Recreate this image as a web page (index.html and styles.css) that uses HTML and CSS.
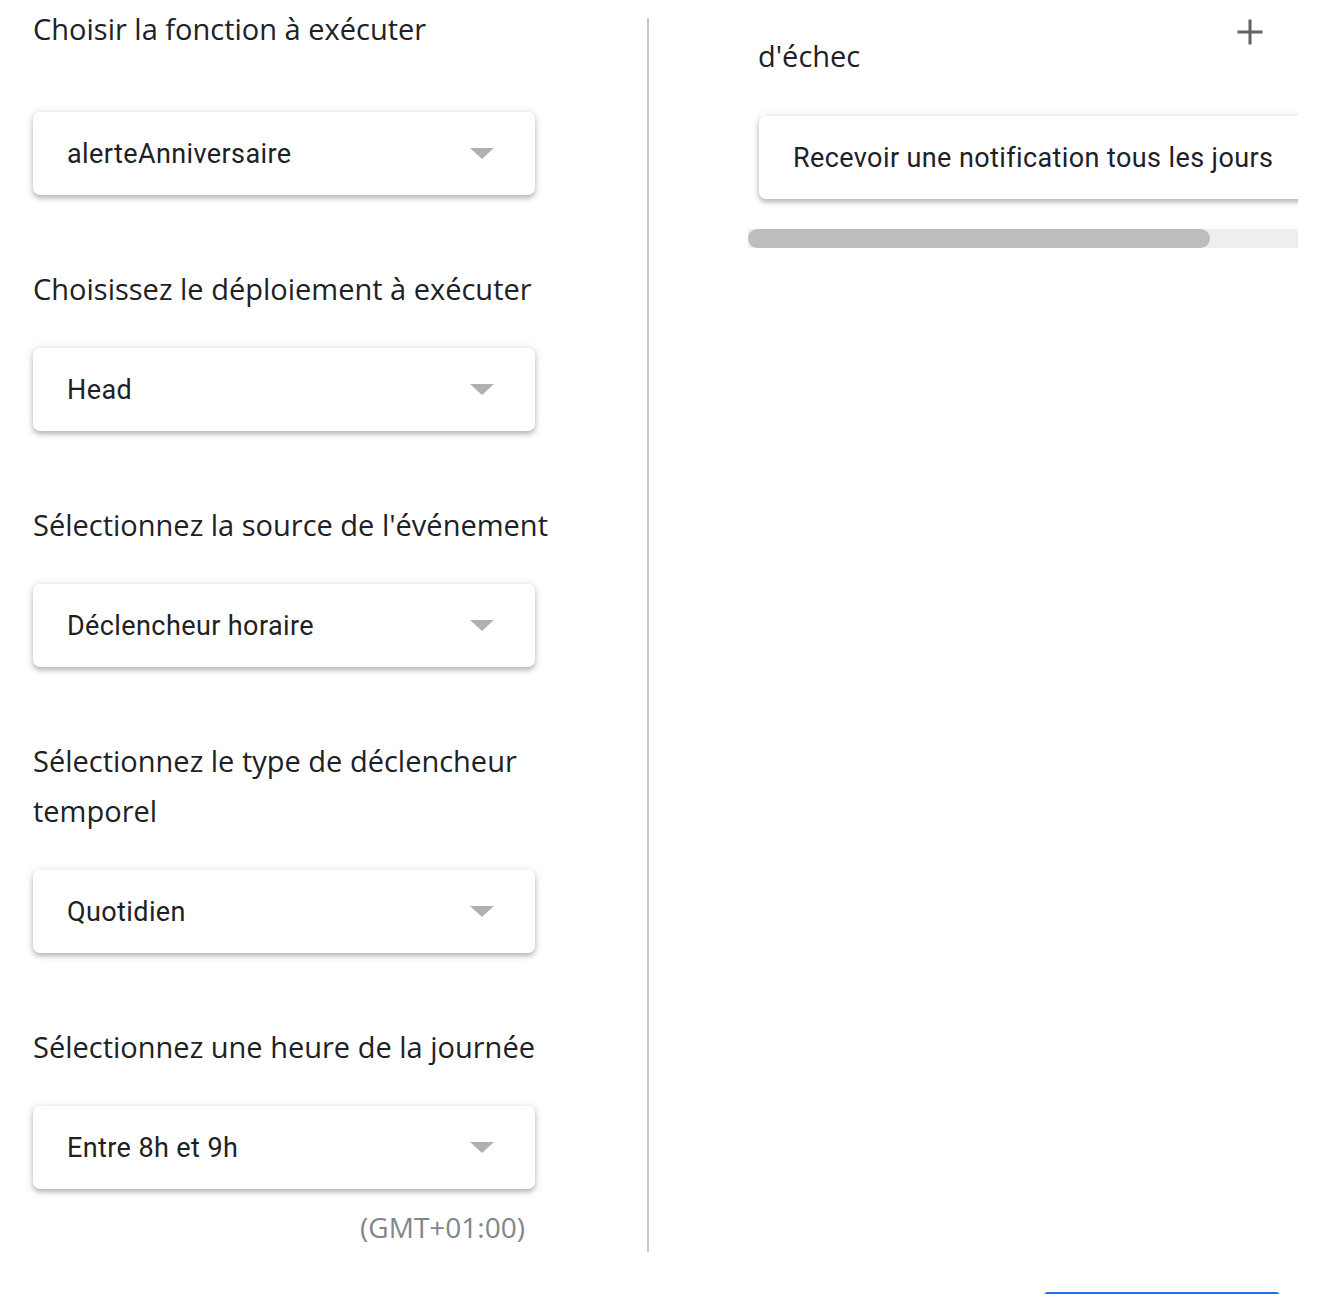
FILE: index.html
```html
<!DOCTYPE html>
<html lang="fr">
<head>
<meta charset="utf-8">
<title>Déclencheur</title>
<link rel="stylesheet" href="styles.css">
</head>
<body>
<div class="page">
  <div class="main">
    <section class="left">
      <div class="field">
        <div class="label label-first">Choisir la fonction à exécuter</div>
        <div class="select"><span class="select-text">alerteAnniversaire</span><span class="arrow"></span></div>
      </div>
      <div class="field">
        <div class="label">Choisissez le déploiement à exécuter</div>
        <div class="select"><span class="select-text">Head</span><span class="arrow"></span></div>
      </div>
      <div class="field">
        <div class="label">Sélectionnez la source de l'événement</div>
        <div class="select"><span class="select-text">Déclencheur horaire</span><span class="arrow"></span></div>
      </div>
      <div class="field">
        <div class="label">Sélectionnez le type de déclencheur temporel</div>
        <div class="select"><span class="select-text">Quotidien</span><span class="arrow"></span></div>
      </div>
      <div class="field field-last">
        <div class="label">Sélectionnez une heure de la journée</div>
        <div class="select"><span class="select-text">Entre 8h et 9h</span><span class="arrow"></span></div>
        <div class="tz">(GMT+01:00)</div>
      </div>
    </section>
    <div class="divider"></div>
    <section class="right">
      <div class="right-head">
        <div class="right-label">d'échec</div>
        <button class="add" aria-label="Ajouter">
          <svg width="28" height="28" viewBox="0 0 28 28"><path d="M14 1.5V26.5M1.5 14H26.5" stroke="#5f6368" stroke-width="3" fill="none"/></svg>
        </button>
      </div>
      <div class="notif-wrap">
        <div class="notif">Recevoir une notification tous les jours</div>
      </div>
      <div class="hscroll"><div class="hscroll-thumb"></div></div>
    </section>
  </div>
  <div class="footer">
    <div class="save"></div>
  </div>
</div>
</body>
</html>
```
FILE: styles.css
```css
html, body {
  margin: 0;
  padding: 0;
  background: #ffffff;
  overflow: hidden;
}
body {
  font-family: "Open Sans", "Noto Sans", sans-serif;
  color: #202124;
}
.page {
  width: 1324px;
  height: 1294px;
  overflow: hidden;
}
.main {
  display: flex;
  align-items: flex-start;
}
.left {
  width: 580px;
  padding-left: 33px;
  padding-right: 34px;
  flex: none;
}
.field {
  margin-bottom: 69px;
}
.field-last {
  margin-bottom: 0;
}
.label {
  font-size: 29px;
  line-height: 50px;
  color: #202124;
  margin-bottom: 34px;
}
.label-first {
  margin-top: 4px;
  margin-bottom: 58px;
}
.select {
  width: 502px;
  height: 83px;
  box-sizing: border-box;
  border-radius: 7px;
  background: #fff;
  box-shadow: 0 3px 5px rgba(60, 64, 67, 0.32), 0 1px 9px 1px rgba(60, 64, 67, 0.12);
  display: flex;
  align-items: center;
  justify-content: space-between;
  padding-left: 34px;
  padding-right: 41px;
}
.select-text {
  font-family: "Roboto", "Liberation Sans", sans-serif;
  font-size: 27px;
  letter-spacing: 0.4px;
  color: #202124;
}
.arrow {
  width: 0;
  height: 0;
  border-left: 12px solid transparent;
  border-right: 12px solid transparent;
  border-top: 11px solid #b0b0b0;
}
.tz {
  width: 502px;
  box-sizing: border-box;
  text-align: right;
  padding-right: 10px;
  margin-top: 21px;
  font-size: 28px;
  line-height: 34px;
  color: #80868b;
}
.divider {
  width: 2px;
  height: 1234px;
  margin-top: 18px;
  background: #c4c7cb;
  flex: none;
}
.right {
  width: 550px;
  margin-left: 99px;
  overflow: hidden;
  flex: none;
}
.right-head {
  display: flex;
  justify-content: space-between;
  align-items: flex-start;
}
.right-label {
  font-size: 29px;
  line-height: 40px;
  padding-top: 36px;
  padding-left: 10px;
  color: #202124;
}
.add {
  border: 0;
  background: none;
  padding: 0;
  margin-top: 18px;
  margin-right: 34px;
  width: 28px;
  height: 28px;
  display: block;
}
.add svg {
  display: block;
}
.notif-wrap {
  padding: 40px 0 0 11px;
  overflow: hidden;
}
.notif {
  width: 720px;
  height: 83px;
  box-sizing: border-box;
  border-radius: 7px;
  background: #fff;
  box-shadow: 0 3px 5px rgba(60, 64, 67, 0.32), 0 1px 9px 1px rgba(60, 64, 67, 0.12);
  display: flex;
  align-items: center;
  padding-left: 34px;
  font-family: "Roboto", "Liberation Sans", sans-serif;
  font-size: 27px;
  letter-spacing: 0.4px;
  color: #202124;
  margin-bottom: 30px;
}
.hscroll {
  height: 19px;
  background: #eeeeee;
}
.hscroll-thumb {
  width: 462px;
  height: 19px;
  border-radius: 10px;
  background: #bdbdbd;
}
.footer {
  display: flex;
  padding-left: 1044px;
  padding-top: 40px;
}
.save {
  width: 236px;
  height: 40px;
  border-radius: 4px;
  background: #1a73e8;
}
```
